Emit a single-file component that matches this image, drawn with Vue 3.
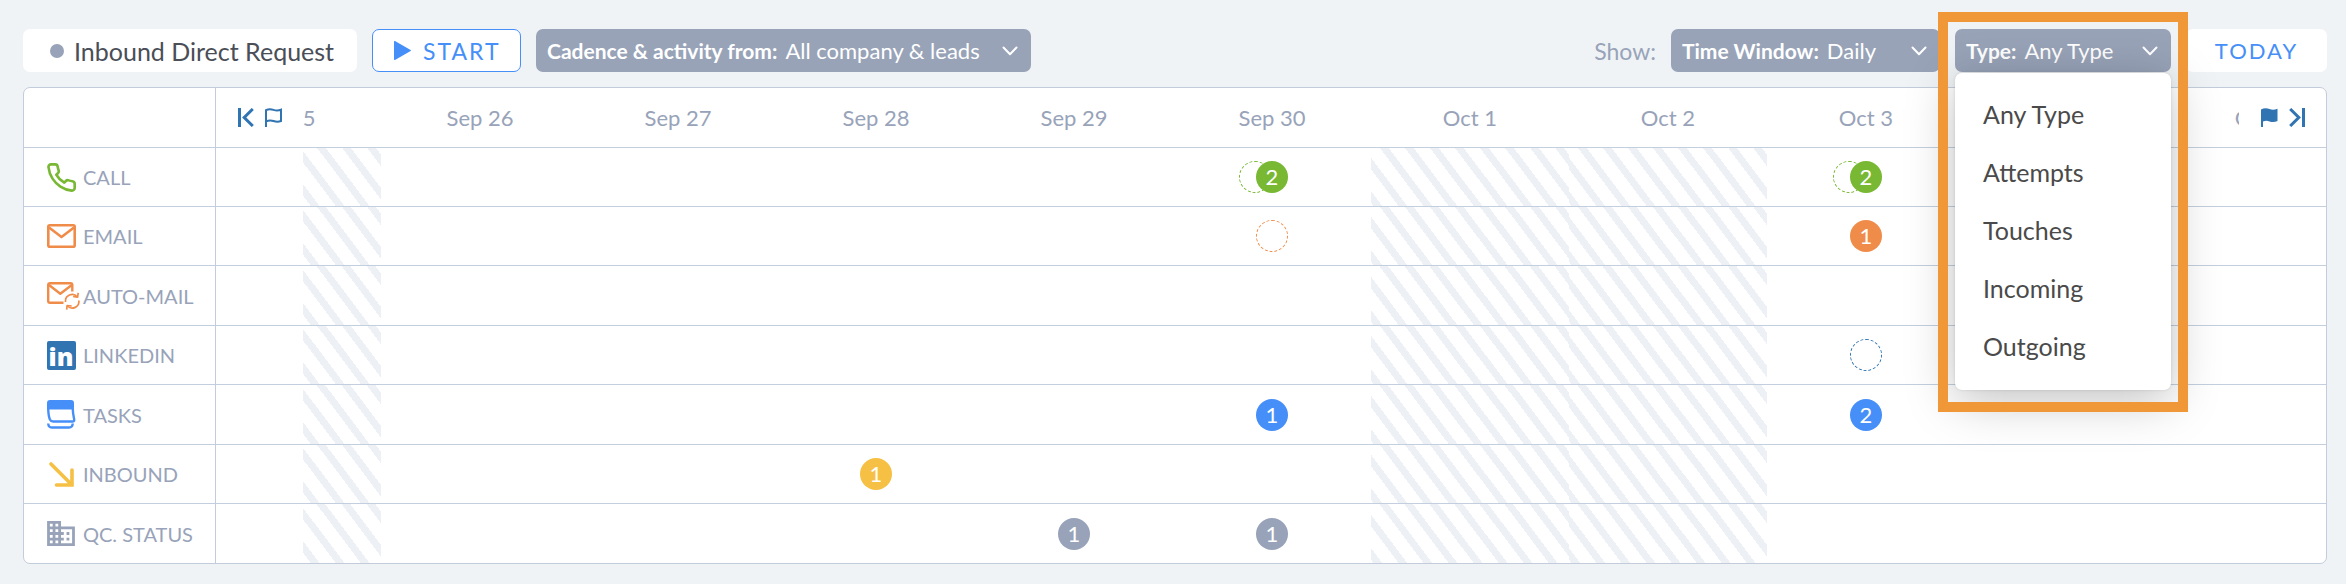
<script setup>
import { ref } from 'vue'

const days = [
  { label: 'Sep 25', off: true, edge: 'first' },
  { label: 'Sep 26' },
  { label: 'Sep 27' },
  { label: 'Sep 28' },
  { label: 'Sep 29' },
  { label: 'Sep 30' },
  { label: 'Oct 1', off: true },
  { label: 'Oct 2', off: true },
  { label: 'Oct 3' },
  { label: 'Oct 4' },
  { label: 'Oct 5', edge: 'last' },
]

const rows = [
  { key: 'call', label: 'CALL', marks: { 'Sep 30': { count: 2, planned: true }, 'Oct 3': { count: 2, planned: true } } },
  { key: 'email', label: 'EMAIL', marks: { 'Sep 30': { planned: true }, 'Oct 3': { count: 1 } } },
  { key: 'auto', label: 'AUTO-MAIL', marks: {} },
  { key: 'linkedin', label: 'LINKEDIN', marks: { 'Oct 3': { planned: true } } },
  { key: 'tasks', label: 'TASKS', marks: { 'Sep 30': { count: 1 }, 'Oct 3': { count: 2 } } },
  { key: 'inbound', label: 'INBOUND', marks: { 'Sep 28': { count: 1 } } },
  { key: 'status', label: 'QC. STATUS', marks: { 'Sep 29': { count: 1 }, 'Sep 30': { count: 1 } } },
]

const types = ['Any Type', 'Attempts', 'Touches', 'Incoming', 'Outgoing']
const type = ref('Any Type')
const open = ref(true)

function pick(t) {
  type.value = t
  open.value = false
}
</script>

<template>
  <main class="page">
    <header class="toolbar">
      <div class="cadence"><span class="dot"></span>Inbound Direct Request</div>
      <button class="start" type="button">
        <svg width="17" height="19" viewBox="0 0 17 19" aria-hidden="true"><path d="M0 .5v18a.6.6 0 0 0 1 .4L16.600 10a.6.6 0 0 0 0-1L1 .1a.6.6 0 0 0-1 .4z" fill="currentColor" /></svg>
        START
      </button>
      <label class="pill source">
        <b>Cadence &amp; activity from:</b>
        <select><option>All company &amp; leads</option></select>
        <svg class="chevron" viewBox="0 0 16 10" aria-hidden="true"><path d="M1.500 1.500 8 8.200l6.500-6.700" /></svg>
      </label>
      <span class="show">Show:</span>
      <label class="pill window">
        <b>Time Window:</b>
        <select><option>Daily</option></select>
        <svg class="chevron" viewBox="0 0 16 10" aria-hidden="true"><path d="M1.500 1.500 8 8.200l6.500-6.700" /></svg>
      </label>
      <div class="type">
        <button class="pill" type="button" aria-haspopup="listbox" :aria-expanded="open" @click="open = !open">
          <b>Type:</b>
          <span class="value">{{ type }}</span>
          <svg class="chevron" viewBox="0 0 16 10" aria-hidden="true"><path d="M1.500 1.500 8 8.200l6.500-6.700" /></svg>
        </button>
        <ul v-if="open" class="menu" role="listbox" aria-label="Type">
          <li v-for="t in types" :key="t" role="option" :aria-selected="t === type">
            <button type="button" @click="pick(t)">{{ t }}</button>
          </li>
        </ul>
      </div>
      <button class="today" type="button">TODAY</button>
    </header>

    <div class="board">
      <table>
        <colgroup>
          <col class="c-label" /><col class="c-nav" /><col class="c-first" />
          <col v-for="n in days.length - 2" :key="n" />
          <col class="c-last" /><col class="c-nav" />
        </colgroup>
        <thead>
          <tr>
            <th class="label"></th>
            <td>
              <div class="nav">
                <button type="button" aria-label="Earliest day">
                  <svg width="16" height="19" viewBox="0 0 16 19" fill="none" stroke="currentColor" stroke-width="3" aria-hidden="true"><path d="M1.500 0v19" /><path d="M14.800 1 6.200 9.500l8.600 8.500" /></svg>
                </button>
                <button type="button" aria-label="First activity">
                  <svg width="17" height="19" viewBox="0 0 17 19" fill="none" stroke="currentColor" stroke-width="2" aria-hidden="true"><path d="M1 19V2.200C4 .6 6 1 8.500 1.900S13 2.900 16 1.800V13c-3 1.200-5 .9-7.500 0S4 12 1 13.400" /></svg>
                </button>
              </div>
            </td>
            <th v-for="d in days" :key="d.label" scope="col">
              <div class="clip" :class="d.edge"><span>{{ d.label }}</span></div>
            </th>
            <td>
              <div class="nav">
                <button type="button" aria-label="Last activity">
                  <svg width="17" height="19" viewBox="0 0 17 19" fill="currentColor" aria-hidden="true"><path d="M0 19V1.500C3-.2 6 .1 8.500 1S13 2 16.500.8V13c-3 1.500-5.500 1.200-8 .4S4.500 12.600 2 13.600V19z" /></svg>
                </button>
                <button type="button" aria-label="Latest day">
                  <svg width="16" height="19" viewBox="0 0 16 19" fill="none" stroke="currentColor" stroke-width="3" aria-hidden="true"><path d="M14.500 0v19" /><path d="M1.200 1 9.800 9.500 1.200 18" /></svg>
                </button>
              </div>
            </td>
          </tr>
        </thead>
        <tbody>
          <tr v-for="r in rows" :key="r.key" :class="r.key">
            <th class="label" scope="row">
              <div class="name">
                <span class="icon">
                  <svg v-if="r.key === 'call'" width="29" height="29" viewBox="1 1 22 22" fill="none" stroke="currentColor" stroke-width="2" stroke-linejoin="round" aria-hidden="true"><path d="M22 16.920v3a2 2 0 0 1-2.180 2 19.790 19.790 0 0 1-8.630-3.070 19.500 19.500 0 0 1-6-6 19.790 19.790 0 0 1-3.070-8.670A2 2 0 0 1 4.110 2h3a2 2 0 0 1 2 1.720c.127.960.361 1.903.7 2.810a2 2 0 0 1-.45 2.110L8.090 9.910a16 16 0 0 0 6 6l1.270-1.270a2 2 0 0 1 2.110-.45c.907.339 1.850.573 2.810.7A2 2 0 0 1 22 16.920z" /></svg>
                  <svg v-else-if="r.key === 'email'" width="29" height="24" viewBox="0 0 29 24" fill="none" stroke="currentColor" stroke-width="2.600" stroke-linejoin="round" aria-hidden="true"><rect x="1.300" y="1.300" width="26.400" height="21.400" rx="1.500" /><path d="M2 3.500 14.500 13 27 3.500" /></svg>
                  <svg v-else-if="r.key === 'auto'" width="33" height="28" viewBox="0 0 33 28" fill="none" stroke="currentColor" stroke-width="2.400" stroke-linejoin="round" aria-hidden="true"><path d="M16.500 20.800H3a1.800 1.800 0 0 1-1.800-1.800V3A1.800 1.800 0 0 1 3 1.200h20.500A1.800 1.800 0 0 1 25.300 3v6.500" /><path d="M2 3l11.300 8.800L24.800 3" /><g stroke-width="1.700"><path d="M18.600 20a6.600 6.600 0 0 1 11.600-5.200M31.800 18.500a6.600 6.600 0 0 1-11.300 5.500" /><path d="M31.200 10.800 30.600 15.200l-4.500-.7M19.700 27.700l.4-4.200 4.600.5" /></g></svg>
                  <svg v-else-if="r.key === 'linkedin'" width="29" height="29" viewBox="0 0 29 29" aria-hidden="true"><rect width="29" height="29" rx="2" fill="currentColor" /><text class="in" x="14" y="25" text-anchor="middle">in</text></svg>
                  <svg v-else-if="r.key === 'tasks'" width="29" height="29" viewBox="0 0 29 29" fill="none" stroke="currentColor" stroke-width="2.400" aria-hidden="true"><path d="M0 9.500V3a3 3 0 0 1 3-3h21a3 3 0 0 1 3 3v6.500z" fill="currentColor" stroke="none" /><path d="M1.200 9c.2 4.500.6 8 1.700 10.500.8 1.600 1.600 2 3.300 2h19.600c1.500 0 1.600-1 1.300-2.500C26.500 16 25.800 13 25.800 9" /><path d="M1.200 23.500c.2 3 1.300 4 3.500 4H22c2.500 0 3.600-1 3.700-4" /></svg>
                  <svg v-else-if="r.key === 'inbound'" width="29" height="29" viewBox="0 0 29 29" fill="none" stroke="currentColor" stroke-width="3.600" stroke-linecap="round" aria-hidden="true"><path d="M4 4l20 20M25 10v15H9.500" /></svg>
                  <svg v-else width="28" height="25" viewBox="2 3 20 18" fill="currentColor" aria-hidden="true"><path d="M12 7V3H2v18h20V7H12zM6 19H4v-2h2v2zm0-4H4v-2h2v2zm0-4H4V9h2v2zm0-4H4V5h2v2zm4 12H8v-2h2v2zm0-4H8v-2h2v2zm0-4H8V9h2v2zm0-4H8V5h2v2zm10 12h-8v-2h2v-2h-2v-2h2v-2h-2V9h8v10zm-2-8h-2v2h2v-2zm0 4h-2v2h2v-2z" /></svg>
                </span>
                {{ r.label }}
              </div>
            </th>
            <td></td>
            <td v-for="d in days" :key="d.label">
              <div class="clip" :class="d.edge">
                <span class="day" :class="{ off: d.off }">
                  <span v-if="r.marks[d.label]" class="mark">
                    <i v-if="r.marks[d.label].planned" class="planned" :class="{ behind: r.marks[d.label].count }"></i>
                    <b v-if="r.marks[d.label].count">{{ r.marks[d.label].count }}</b>
                  </span>
                </span>
              </div>
            </td>
            <td></td>
          </tr>
        </tbody>
      </table>
    </div>
  </main>
</template>

<style>
html,
body {
  background: #f0f3f6;
}
</style>

<style scoped>
.page {
  padding: 29px 19px 20px 23px;
  font-family: Lato, "Open Sans", sans-serif;
  font-size: 22px;
  color: #98a3b9;
}
.page * {
  box-sizing: border-box;
}
button,
select {
  font: inherit;
  color: inherit;
  background: none;
  border: 0;
  padding: 0;
  margin: 0;
}
.toolbar {
  display: flex;
  gap: 15px;
  margin-bottom: 15px;
}
.toolbar > * {
  height: 43px;
}
.cadence {
  display: flex;
  align-items: center;
  gap: 10px;
  width: 334px;
  padding-left: 27px;
  border-radius: 7px;
  background: #fff;
  color: #4a4e57;
  font-size: 25px;
}
.dot {
  width: 14px;
  height: 14px;
  border-radius: 50%;
  background: #98a3b9;
}
.start {
  display: flex;
  align-items: center;
  gap: 12px;
  width: 149px;
  padding-left: 21px;
  border: 1px solid #468ff8;
  border-radius: 7px;
  background: #fff;
  color: #468ff8;
  font-size: 23px;
  letter-spacing: 2px;
}
.pill {
  display: flex;
  align-items: center;
  gap: 8px;
  height: 43px;
  padding: 0 13px 0 11px;
  border-radius: 7px;
  background: #98a3b8;
  color: #fff;
}
.pill b {
  font-size: 21px;
}
.pill select,
.value {
  flex: 1;
  appearance: none;
  text-align: left;
}
.chevron {
  width: 16px;
  height: 10px;
  fill: none;
  stroke: #fff;
  stroke-width: 2;
  stroke-linecap: round;
  stroke-linejoin: round;
}
.source {
  width: 495px;
}
.show {
  display: flex;
  align-items: center;
  margin-left: auto;
  font-size: 23px;
}
.window {
  width: 269px;
}
.type {
  position: relative;
  width: 216px;
}
.type .pill {
  width: 100%;
}
.menu {
  position: absolute;
  z-index: 2;
  top: 44px;
  left: 0;
  width: 100%;
  margin: 0;
  padding: 12px 0 15px;
  list-style: none;
  border-radius: 7px;
  background: #fff;
  box-shadow: 0 10px 50px rgba(0, 0, 0, 0.25), 0 0 3px rgba(0, 0, 0, 0.12);
  color: #4a4a4a;
  font-size: 25px;
}
.menu::after {
  content: "";
  position: absolute;
  inset: -61px -17px -22px;
  border: 10px solid #f09837;
  pointer-events: none;
}
.menu button {
  display: block;
  width: 100%;
  height: 58px;
  padding-left: 28px;
  text-align: left;
}
.today {
  width: 141px;
  border-radius: 7px;
  background: #fff;
  color: #468ff8;
  font-size: 22px;
  letter-spacing: 2px;
}
.board {
  border: 1px solid #c3ccda;
  border-radius: 7px;
  background: #fff;
}
table {
  width: 100%;
  table-layout: fixed;
  border-spacing: 0;
}
.c-label {
  width: 192px;
}
.c-nav {
  width: 87px;
}
.c-first {
  width: 78px;
}
.c-last {
  width: 76px;
}
th,
td {
  height: 59px;
  padding: 0;
  font-weight: 400;
  border-top: 1px solid #c3cfde;
}
thead th,
thead td {
  border-top: 0;
}
tbody tr:nth-child(2n + 3) > * {
  height: 60px;
}
.label {
  border-right: 1px solid #c3ccda;
}
.nav {
  display: flex;
  gap: 11px;
  padding-left: 22px;
  color: #3174b2;
}
.nav button,
.nav svg {
  display: block;
}
.clip {
  display: flex;
  justify-content: center;
  overflow: hidden;
}
.clip.first {
  justify-content: flex-end;
}
.clip.last {
  justify-content: flex-start;
}
.clip > span {
  flex: 1 0 auto;
  text-align: center;
}
.clip.first > span,
.clip.last > span {
  flex: none;
  width: 198px;
}
.day {
  display: flex;
  align-items: center;
  justify-content: center;
  height: 58px;
}
tr:nth-child(2n + 3) .day {
  height: 59px;
}
.off {
  background: repeating-linear-gradient(53deg, transparent 0 2px, #edf0f5 2px 9px, transparent 9px 20px);
}
.mark {
  position: relative;
  display: block;
  width: 32px;
  height: 32px;
}
.mark b {
  position: relative;
  display: block;
  height: 32px;
  border-radius: 50%;
  background: currentColor;
  font-weight: 400;
  line-height: 32px;
  text-align: center;
}
.mark b::first-letter {
  color: #fff;
}
.planned {
  position: absolute;
  inset: 0;
  border: 1px dashed;
  border-radius: 50%;
}
.behind {
  left: -17px;
  right: 17px;
}
.name {
  display: flex;
  align-items: center;
  gap: 7px;
  padding-left: 23px;
  font-size: 20px;
  text-align: left;
  white-space: nowrap;
}
.icon {
  display: flex;
  width: 29px;
}
.icon svg {
  flex: none;
}
.in {
  font: 800 25px "Open Sans", sans-serif;
  fill: #fff;
}
.call .icon, .call .mark { color: #78b833; }
.email .icon, .email .mark, .auto .icon { color: #f08c4a; }
.linkedin .icon, .linkedin .mark { color: #3174b2; }
.tasks .icon, .tasks .mark { color: #468ff8; }
.inbound .icon, .inbound .mark { color: #f6c044; }
.status .icon, .status .mark { color: #98a3b9; }
</style>
